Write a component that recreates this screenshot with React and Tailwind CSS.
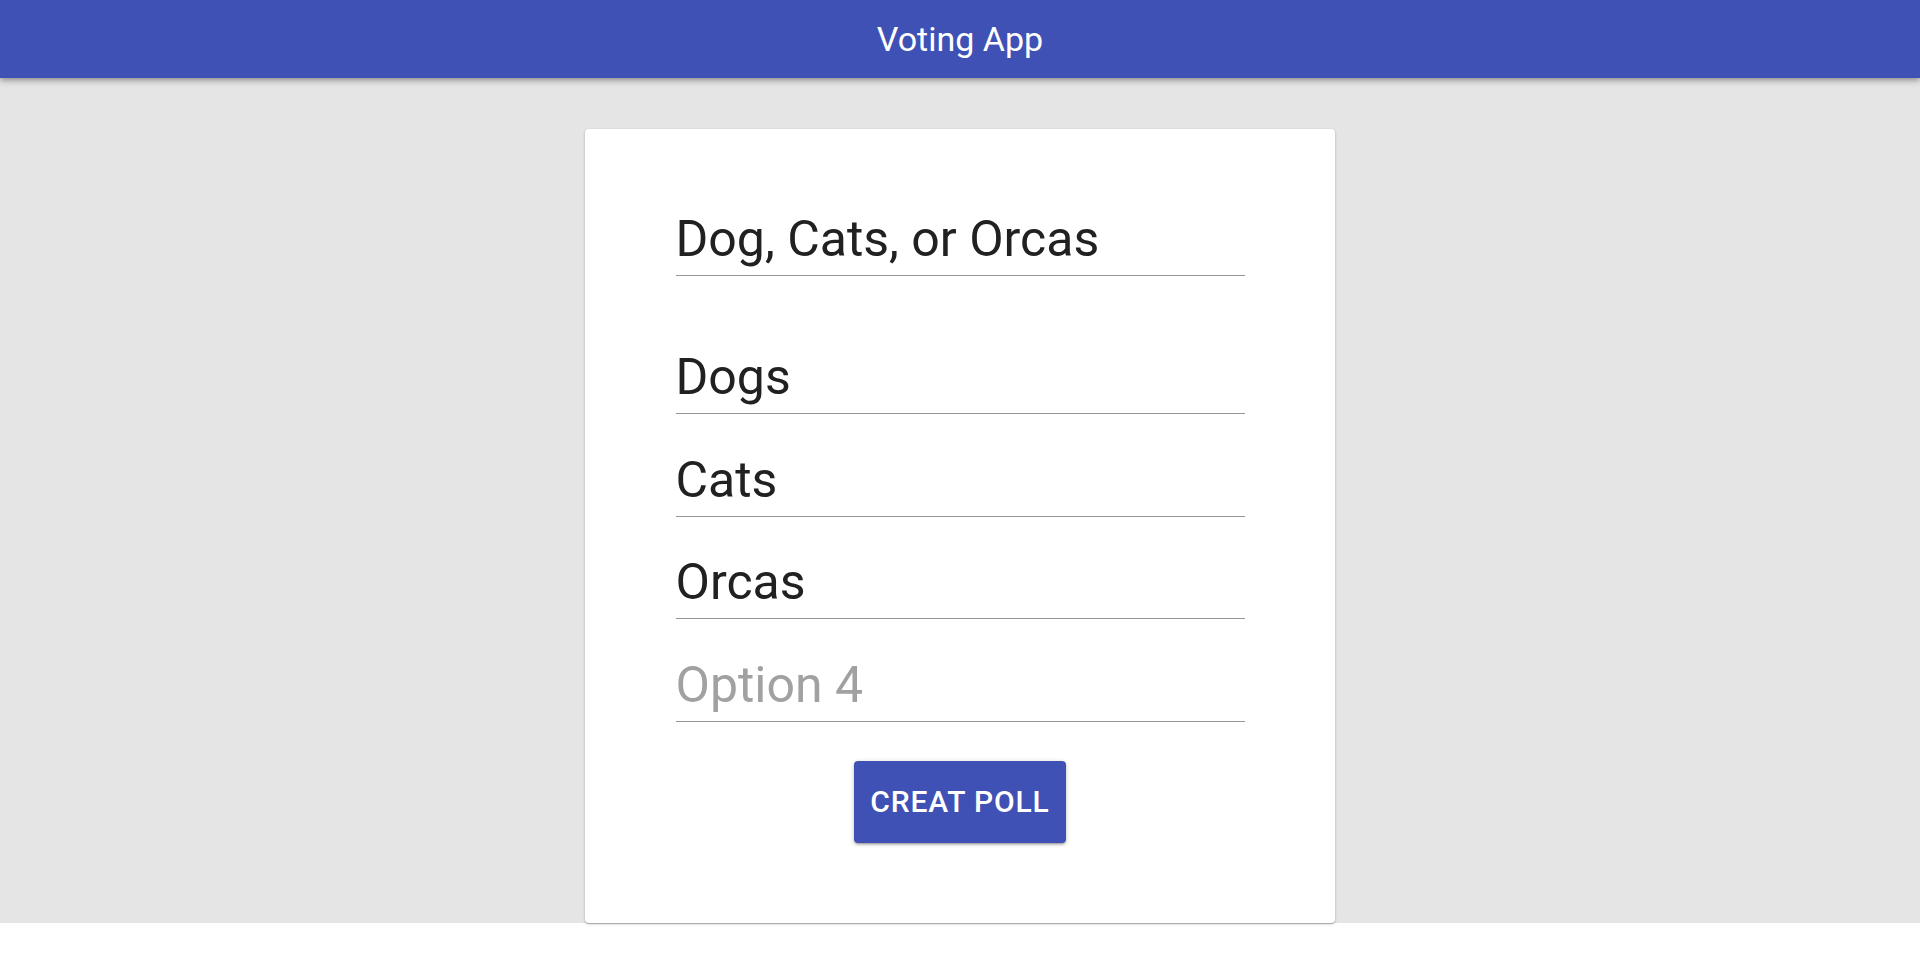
import React from 'react';

export default function App(){
  const [title,setTitle]=React.useState('Dog, Cats, or Orcas');
  const [options,setOptions]=React.useState(['Dogs','Cats','Orcas','']);
  function setOption(i,v){
    setOptions(o=>o.map((x,j)=>j===i?v:x));
  }
  const inputCls="block w-full bg-transparent text-[50px] leading-[55px] pb-[8px] text-[#212121] placeholder:text-[#a1a1a1] border-b border-[#949494] outline-none";
  return (
    <div className="min-h-screen bg-white" style={{fontFamily:'Roboto, "Liberation Sans", sans-serif'}}>
      <header className="h-[78px] bg-[#3f51b5] flex items-center justify-center shadow-[0_2px_4px_-1px_rgba(0,0,0,0.2),0_4px_5px_0_rgba(0,0,0,0.14),0_1px_10px_0_rgba(0,0,0,0.12)] relative z-10">
        <h1 className="text-[34px] font-normal text-white">Voting App</h1>
      </header>
      <main className="bg-[#e5e5e5] pt-[51px] flex justify-center">
        <form onSubmit={e=>e.preventDefault()} className="w-[750px] bg-white rounded-[4px] shadow-[0_1px_3px_0_rgba(0,0,0,0.2),0_1px_1px_0_rgba(0,0,0,0.14),0_2px_1px_-1px_rgba(0,0,0,0.12)] pt-[83px] pb-[80px] flex flex-col items-center">
          <div className="w-[569px]">
            <input value={title} onChange={e=>setTitle(e.target.value)} className={inputCls} />
          </div>
          <div className="w-[569px] mt-[74px] flex flex-col gap-[38.5px]">
            {options.map((o,i)=>(
              <input key={i} value={o} placeholder={'Option '+(i+1)} onChange={e=>setOption(i,e.target.value)} className={inputCls} />
            ))}
          </div>
          <button type="submit" className="mt-[39px] h-[82px] px-[16px] bg-[#3f51b5] text-white text-[30px] font-medium uppercase tracking-[0.02857em] rounded-[4px] shadow-[0_1px_5px_0_rgba(0,0,0,0.2),0_2px_2px_0_rgba(0,0,0,0.14),0_3px_1px_-2px_rgba(0,0,0,0.12)]">
            Creat Poll
          </button>
        </form>
      </main>
    </div>
  );
}
